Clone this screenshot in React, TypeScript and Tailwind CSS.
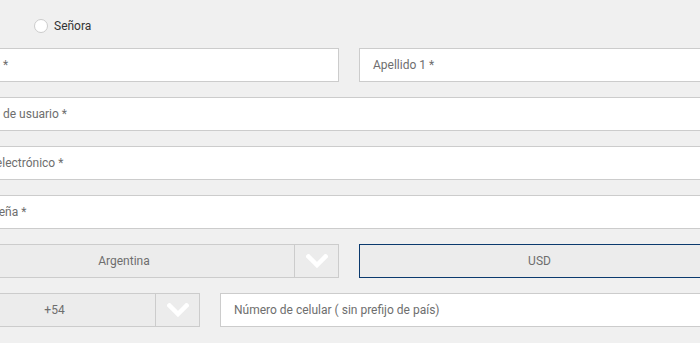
import React from "react";

const Chevron = () => (
  <svg width="22" height="14" viewBox="0 0 22 14" fill="none">
    <polyline points="2.5,2.5 11,11 19.5,2.5" stroke="#ffffff" strokeWidth="4.5" strokeLinecap="square" />
  </svg>
);

const Input = ({ label, className = "" }: { label: string; className?: string }) => (
  <div className={`h-[34px] bg-white border border-[#cccccc] flex items-center pl-[13px] text-[12px] text-[#6e6e6e] whitespace-nowrap ${className}`}>
    {label}
  </div>
);

const Select = ({ label, className = "", active = false }: { label: string; className?: string; active?: boolean }) => (
  <div className={`h-[34px] bg-[#ececec] border flex ${active ? "border-[#0b3a6e]" : "border-[#cccccc]"} ${className}`}>
    <div className="flex-1 flex items-center justify-center pl-[10px] text-[12px] text-[#6e6e6e]">{label}</div>
    <div className={`w-[44px] border-l ${active ? "border-[#0b3a6e]" : "border-[#cccccc]"} flex items-center justify-center`}>
      <Chevron />
    </div>
  </div>
);

export default function App() {
  return (
    <div className="w-[700px] h-[343px] bg-[#f0f0f0] overflow-hidden" style={{ fontFamily: "Roboto, 'Liberation Sans', sans-serif" }}>
      <div className="ml-[-57px] w-[811px]">
        <div className="h-[48px] pt-[3px] flex items-center">
          <div className="ml-[91px] flex items-center gap-[6px]">
            <div className="w-[14px] h-[14px] rounded-full bg-white border border-[#cccccc]" />
            <span className="text-[12px] text-[#333333]">Señora</span>
          </div>
        </div>
        <div className="flex flex-col gap-[15px]">
          <div className="flex gap-[20px]">
            <Input label="Nombre *" className="w-[396px]" />
            <Input label="Apellido 1 *" className="flex-1" />
          </div>
          <Input label="Nombre de usuario *" />
          <Input label="Correo electrónico *" />
          <Input label="Contraseña *" />
          <div className="flex gap-[20px]">
            <Select label="Argentina" className="w-[396px]" />
            <Select label="USD" className="flex-1" active />
          </div>
          <div className="flex gap-[20px]">
            <Select label="+54" className="w-[257px]" />
            <Input label="Número de celular ( sin prefijo de país)" className="flex-1" />
          </div>
        </div>
      </div>
    </div>
  );
}
